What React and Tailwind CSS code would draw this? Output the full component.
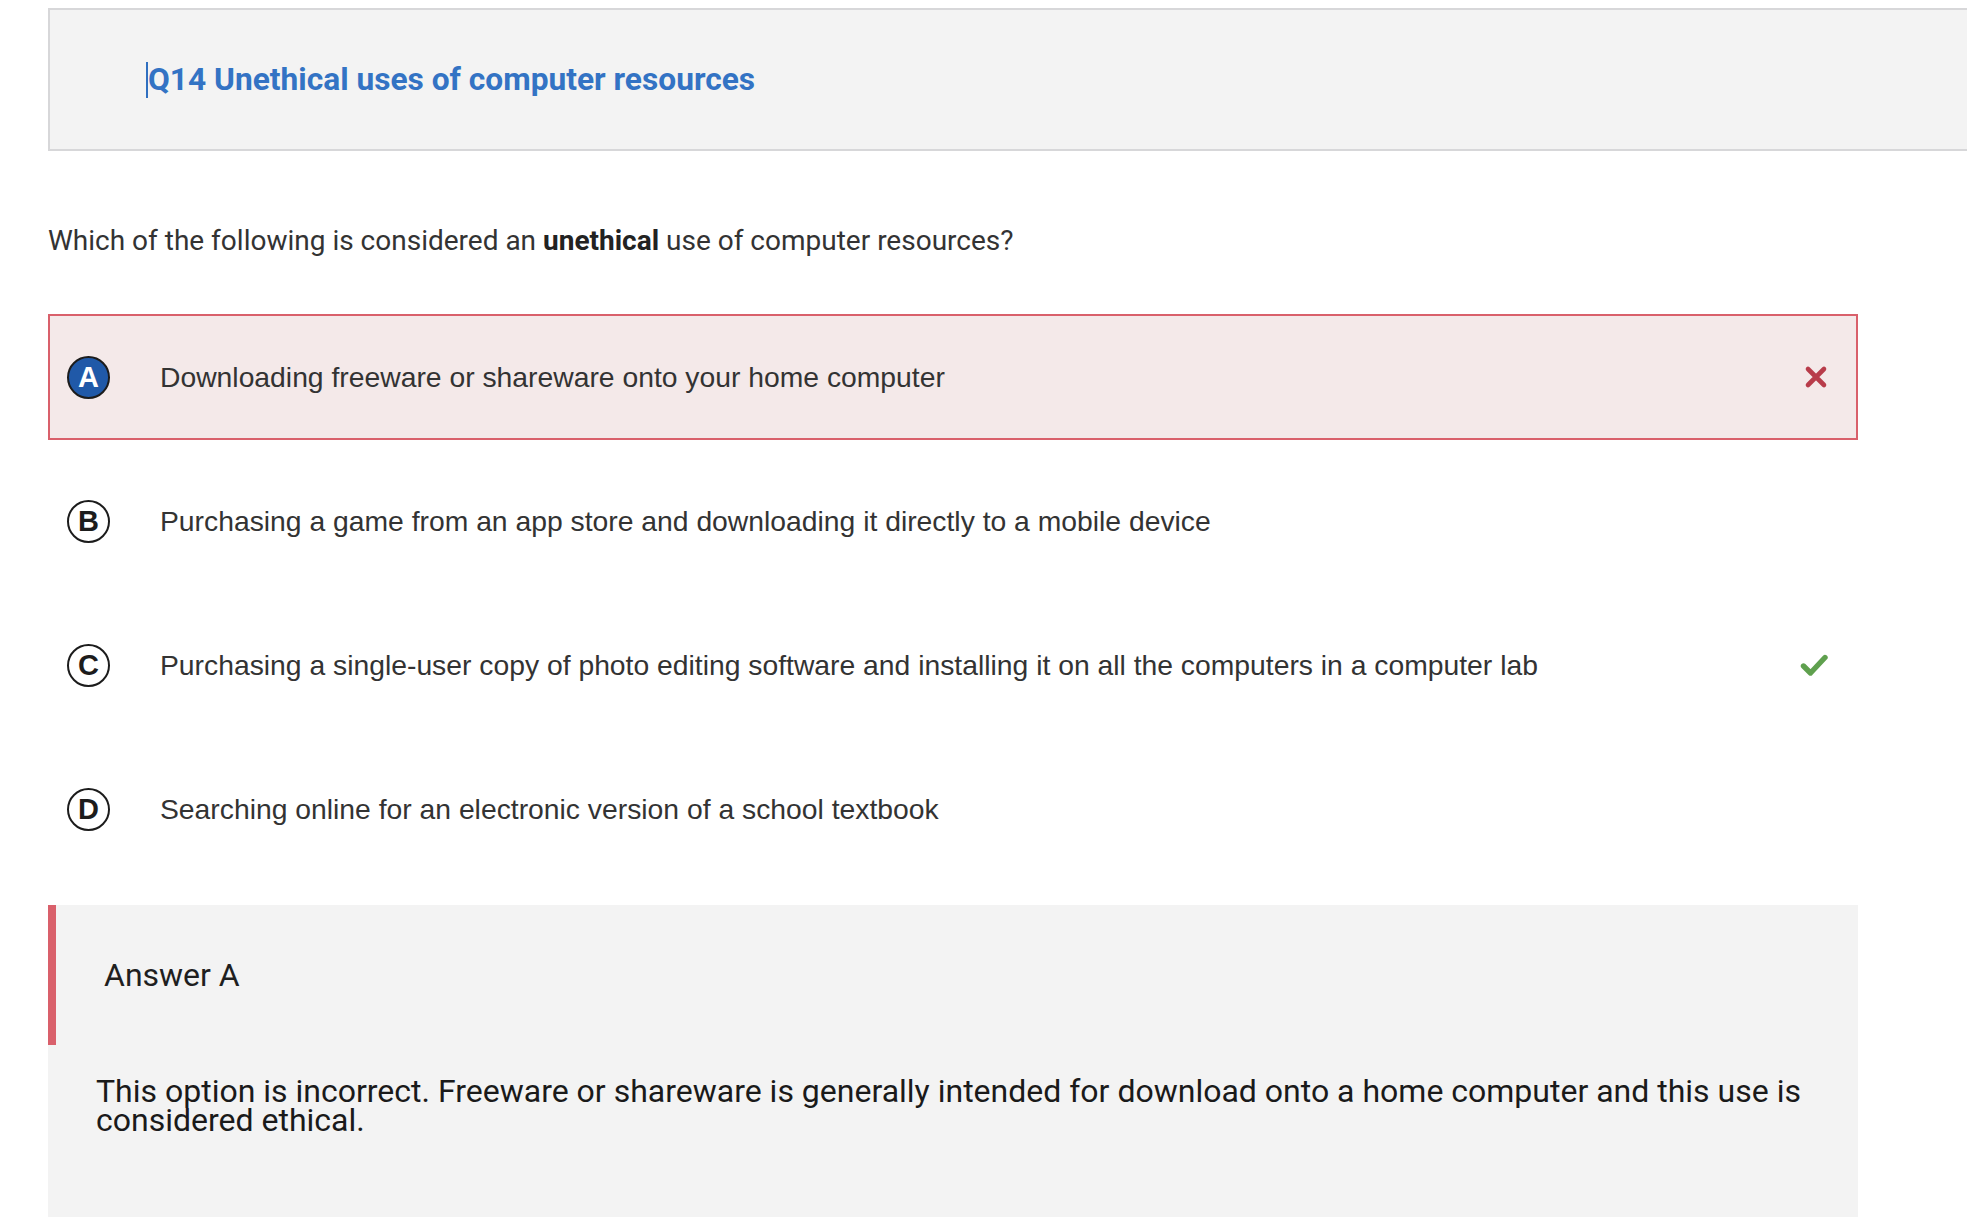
import React from 'react';

const options = [
    { letter: 'A', text: 'Downloading freeware or shareware onto your home computer', selected: true, mark: 'wrong' },
    { letter: 'B', text: 'Purchasing a game from an app store and downloading it directly to a mobile device' },
    { letter: 'C', text: 'Purchasing a single-user copy of photo editing software and installing it on all the computers in a computer lab', mark: 'right' },
    { letter: 'D', text: 'Searching online for an electronic version of a school textbook' },
];

// thick X, like the font-awesome "times" glyph
const WrongMark = () => (
    <svg width="24" height="24" viewBox="0 0 24 24" className="shrink-0">
        <path d="M4 4 L20 20 M20 4 L4 20" stroke="#b83c4a" strokeWidth="4.6" strokeLinecap="round" fill="none" />
    </svg>
);

const RightMark = () => (
    <svg width="28" height="23" viewBox="0 0 28 23" className="shrink-0">
        <path d="M3.5 12 L10.5 19 L25 3.5" stroke="#5fa04e" strokeWidth="5.4" strokeLinecap="round" strokeLinejoin="round" fill="none" />
    </svg>
);

const LetterCircle = ({ letter, selected }) => (
    <div
        className={`w-[43px] h-[43px] shrink-0 rounded-full border-2 border-[#1c1c1c] flex items-center justify-center font-['Liberation_Sans',Arial,sans-serif] font-bold text-[29px] leading-none ${
            selected ? 'bg-[#2059a8] text-white' : 'bg-white text-[#1c1c1c]'
        }`}
    >
        {letter}
    </div>
);

const OptionRow = ({ letter, text, selected, mark }) => (
    <div
        className={`h-[126px] flex items-center pl-[17px] pr-[28px] border-2 ${
            selected ? 'border-[#d9606b] bg-[#f4e9e9]' : 'border-transparent bg-white'
        }`}
    >
        <LetterCircle letter={letter} selected={selected} />
        <span className="ml-[50px] text-[28.3px] leading-[36px] text-[#333] font-['Liberation_Sans',Arial,sans-serif]">
            {text}
        </span>
        <div className="ml-auto flex items-center">
            {mark === 'wrong' && <WrongMark />}
            {mark === 'right' && <RightMark />}
        </div>
    </div>
);

export default function App() {
    return (
        <div className="w-full h-[1219px] bg-white overflow-hidden pl-[48px] font-['Roboto','Liberation_Sans',sans-serif]">
            {/* Question header strip */}
            <div className="mt-[8px] w-[1940px] h-[143px] bg-[#f3f3f3] border-2 border-r-0 border-[#d7d7d9] flex items-center pl-[96px]">
                <h2 className="border-l-2 border-[#2f6fc0] text-[31.7px] leading-[36px] font-bold text-[#3373c4]">
                    Q14 Unethical uses of computer resources
                </h2>
            </div>

            <div className="w-[1810px]">
                <p className="mt-[72px] text-[28px] leading-[36px] text-[#333]">
                    Which of the following is considered an <strong className="font-bold text-[#222]">unethical</strong> use of computer resources?
                </p>

                <div className="mt-[55px] flex flex-col gap-[18px]">
                    {options.map((o) => (
                        <OptionRow key={o.letter} {...o} />
                    ))}
                </div>

                {/* Feedback */}
                <div className="mt-[33px] h-[312px] bg-[#f3f3f3]">
                    <div className="h-[140px] border-l-8 border-[#d9606b] flex items-center pl-[48px]">
                        <span className="text-[32px] leading-[36px] text-[#1f1f1f]">Answer A</span>
                    </div>
                    <p className="mt-[32px] pl-[48px] pr-[49px] text-[32px] leading-[29px] text-[#1a1a1a]">
                        This option is incorrect. Freeware or shareware is generally intended for download onto a home computer and this use is considered ethical.
                    </p>
                </div>
            </div>
        </div>
    );
}
